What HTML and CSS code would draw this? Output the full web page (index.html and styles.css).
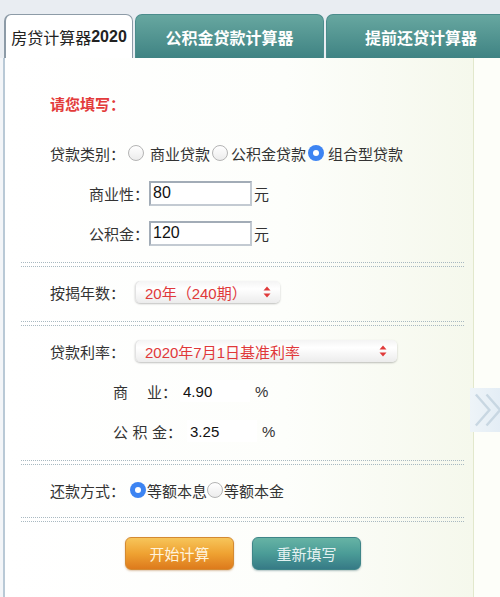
FILE: index.html
```html
<!DOCTYPE html>
<html lang="zh-CN">
<head>
<meta charset="utf-8">
<title>房贷计算器2020</title>
<link rel="stylesheet" href="styles.css">
</head>
<body>
<div class="tabs">
  <div class="tab active">房贷计算器<b>2020</b></div>
  <div class="tab t2">公积金贷款计算器</div>
  <div class="tab t3">提前还贷计算器</div>
</div>
<div class="main">
  <div class="panel">
    <div class="row title">请您填写：</div>
    <div class="row r-type">
      <span class="lbl">贷款类别：</span>
      <span class="radio r1"></span><span class="opt o1">商业贷款</span>
      <span class="radio r2"></span><span class="opt">公积金贷款</span>
      <span class="radio on r3"></span><span class="opt o3">组合型贷款</span>
    </div>
    <div class="row r-amt">
      <span class="lbl-amt">商业性：</span>
      <input class="amt" type="text" value="80"><span class="unit">元</span>
    </div>
    <div class="row r-amt">
      <span class="lbl-amt">公积金：</span>
      <input class="amt" type="text" value="120"><span class="unit">元</span>
    </div>
    <div class="sep"></div>
    <div class="row r-sel">
      <span class="lbl lbl-sel">按揭年数：</span>
      <div class="sel sel-years"><span>20年（240期）</span>
        <svg class="arr" width="8" height="12" viewBox="0 0 8 12"><path d="M4 0.5 L7.5 4.5 H0.5 Z M4 11.5 L7.5 7.5 H0.5 Z" fill="#e03a3a"/></svg>
      </div>
    </div>
    <div class="sep"></div>
    <div class="row r-sel">
      <span class="lbl lbl-sel">贷款利率：</span>
      <div class="sel sel-rate"><span>2020年7月1日基准利率</span>
        <svg class="arr" width="8" height="12" viewBox="0 0 8 12"><path d="M4 0.5 L7.5 4.5 H0.5 Z M4 11.5 L7.5 7.5 H0.5 Z" fill="#e03a3a"/></svg>
      </div>
    </div>
    <div class="row r-rate">
      <span class="lbl-rate l-biz">商<span class="gap"></span>业：</span>
      <input class="rate" type="text" value="4.90"><span class="pct">%</span>
    </div>
    <div class="row r-rate">
      <span class="lbl-rate l-fund"><span class="ls">公积</span>金：</span>
      <input class="rate rate-fund" type="text" value="3.25"><span class="pct">%</span>
    </div>
    <div class="sep"></div>
    <div class="row r-pay">
      <span class="lbl">还款方式：</span>
      <span class="radio on p1"></span><span class="opt">等额本息</span>
      <span class="radio p2"></span><span class="opt">等额本金</span>
    </div>
    <div class="sep sep-last"></div>
    <div class="btns">
      <button class="btn btn-go">开始计算</button>
      <button class="btn btn-reset">重新填写</button>
    </div>
  </div>
  <div class="side"></div>
  <div class="chev">
    <svg width="30" height="44" viewBox="0 0 30 44"><path d="M3 6 L17 22 L3 38 M14 6 L28 22 L14 38" fill="none" stroke="#c8d7e2" stroke-width="2.5"/></svg>
  </div>
</div>
</body>
</html>
```
FILE: styles.css
```css
* { box-sizing: border-box; }
html, body { margin: 0; padding: 0; }
body {
  width: 500px;
  height: 597px;
  overflow: hidden;
  background: #fdfef9;
  font-family: "Liberation Sans", "Noto Sans CJK SC", sans-serif;
  font-size: 15px;
  color: #333;
}
.tabs {
  display: flex;
  gap: 2px;
  padding: 14px 0 0 4px;
  background: #e9edf2;
  height: 58px;
  overflow: hidden;
}
.tab {
  height: 44px;
  display: flex;
  align-items: center;
  justify-content: center;
  font-size: 16px;
  font-weight: bold;
  color: #fff;
  border-radius: 7px 7px 0 0;
  background: linear-gradient(to bottom, #67a7a0, #3f8383);
  border: 1px solid #4b8c8c;
  border-bottom: none;
  flex: none;
  white-space: nowrap;
}
.tab.active {
  width: 129px;
  background: #fff;
  color: #222;
  font-weight: normal;
  border-color: #8d9ba7;
  border-width: 1px 1px 0 2px;
}
.tab.active b { font-weight: bold; }
.t2 { width: 189px; }
.t3 { width: 190px; }
.main {
  position: relative;
  display: flex;
  height: 539px;
  background: #f3f5f8;
}
.panel {
  width: 471px;
  margin-left: 3px;
  flex: none;
  border-left: 2px solid #b9c9d6;
  border-right: 1px solid #e2e8cc;
  background: linear-gradient(to right, #ffffff 0%, #fdfefb 60%, #f5f8ec 100%);
  padding-top: 25px;
}
.side { flex: 1; background: #fdfef9; }
.row {
  height: 40px;
  display: flex;
  align-items: center;
  padding-left: 45px;
  white-space: nowrap;
}
.title {
  color: #e33b3b;
  font-weight: bold;
  margin-bottom: 10px;
}
.lbl { display: inline-block; }
.r-type .lbl { width: 78px; }
.radio {
  width: 16px;
  height: 16px;
  border-radius: 50%;
  border: 1px solid #b4b4b4;
  background: linear-gradient(to bottom, #ffffff, #ececec);
  flex: none;
  position: relative;
}
.radio.on {
  border: none;
  background: #3d84f2;
}
.radio.on::after {
  content: "";
  position: absolute;
  left: 5px;
  top: 5px;
  width: 6px;
  height: 6px;
  border-radius: 50%;
  background: #fff;
}
.opt { margin-left: 3px; }
.o1 { margin-left: 6px; margin-right: 1px; }
.r3 { margin-left: 2px; }
.o3 { margin-left: 4px; }
.r2 { margin-left: 1px; }
.r-amt { padding-left: 0; }
.lbl-amt {
  width: 144px;
  text-align: right;
}
.amt {
  width: 103px;
  height: 25px;
  border: 2px solid #a2acb7;
  border-right-color: #c3cad2;
  border-bottom-color: #c3cad2;
  background: #fff;
  font-family: "Liberation Sans", sans-serif;
  font-size: 16px;
  color: #111;
  padding: 0 2px;
  margin: 0;
  outline: none;
}
.unit { margin-left: 2px; }
.sep {
  height: 5px;
  margin: 9px 9px 5px 16px;
  border-top: 1px dotted #a9b9c1;
  border-bottom: 1px dotted #a9b9c1;
}
.sep-last { margin-top: 7px; margin-bottom: 15px; }
.lbl-sel { width: 85px; }
.sel {
  height: 22px;
  border-radius: 5px;
  background: linear-gradient(to bottom, #f4f4f4 0%, #ffffff 35%, #ececec 100%);
  box-shadow: 0 1px 2px rgba(0,0,0,0.25), inset 1px 0 0 #e2e2e2;
  display: flex;
  align-items: center;
  justify-content: space-between;
  padding: 0 9px 0 10px;
  color: #e0383a;
  font-size: 15px;
}
.sel-years { width: 145px; }
.sel-rate { width: 262px; padding-right: 10px; }
.arr { flex: none; }
.r-rate { padding-left: 108px; }
.lbl-rate { display: inline-flex; }
.gap { display: inline-block; width: 19px; }
.ls { letter-spacing: 4.5px; }
.rate {
  width: 70px;
  height: 22px;
  border: none;
  background: #fff;
  font-family: "Liberation Sans", sans-serif;
  font-size: 15px;
  color: #111;
  padding: 0 3px;
  margin: 0 0 0 3px;
  outline: none;
}
.rate-fund { margin-left: 5px; }
.pct { margin-left: 5px; font-size: 15px; }
.r-pay { margin-top: 2px; }
.r-pay .lbl { width: 80px; }
.r-pay .opt { margin-left: 1px; }
.btns {
  display: flex;
  gap: 18px;
  padding-left: 120px;
}
.btn {
  width: 109px;
  height: 33px;
  border-radius: 6px;
  font-family: "Noto Sans CJK SC", sans-serif;
  font-size: 15px;
  padding: 0;
  cursor: pointer;
}
.btn-go {
  background: linear-gradient(to bottom, #f7c55a 0%, #efa232 50%, #dd7a1c 100%);
  border: 1px solid #d48a32;
  color: #fff3dc;
  box-shadow: 0 1px 2px rgba(160,90,20,0.35);
}
.btn-reset {
  background: linear-gradient(to bottom, #66b3a5 0%, #4b9c97 50%, #367a86 100%);
  border: 1px solid #3f8588;
  color: #e3f1f1;
  box-shadow: 0 1px 2px rgba(30,80,90,0.35);
}
.chev {
  position: absolute;
  left: 470px;
  top: 330px;
  width: 32px;
  height: 44px;
  background: linear-gradient(to right, #eef4f8, #e3edf5);
  display: flex;
  align-items: center;
  padding-left: 3px;
}
```
